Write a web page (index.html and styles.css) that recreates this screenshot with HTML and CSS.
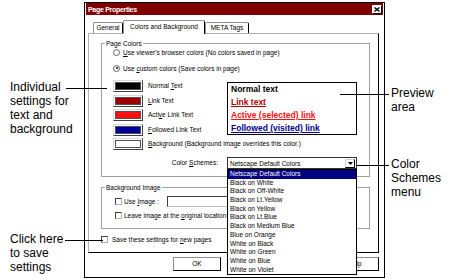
FILE: index.html
```html
<!DOCTYPE html>
<html lang="en">
<head>
  <meta charset="UTF-8">
  <meta name="viewport" content="width=device-width, initial-scale=1.0">
  <title>Page Properties</title>
  <link rel="stylesheet" href="styles.css">
</head>
<body>
  <div class="page">
    <div class="notes notes-left">
      <div class="note note-individual">Individual<br>settings for<br>text and<br>background</div>
      <div class="note note-save">Click here<br>to save<br>settings</div>
    </div>

    <div class="dialog">
      <div class="titlebar">
        <span class="title">Page Properties</span>
        <span class="close">
          <svg width="6" height="5" viewBox="0 0 6 5"><path d="M0.5 0.5 L5.5 4.5 M5.5 0.5 L0.5 4.5" stroke="#000" stroke-width="1.4"/></svg>
        </span>
      </div>

      <div class="tabs">
        <div class="tab tab-general">General</div>
        <div class="tab tab-active">Colors and Background</div>
        <div class="tab tab-meta">META Tags</div>
      </div>

      <div class="panel">
        <fieldset class="group group-colors">
          <legend>Page Colors</legend>
          <div class="group-body">
            <div class="option"><span class="radio"></span><span><u>U</u>se viewer's browser colors (No colors saved in page)</span></div>
            <div class="option"><span class="radio radio-on"></span><span>Use <u>c</u>ustom colors (Save colors in page)</span></div>

            <div class="color-grid">
              <div class="color-row"><span class="swatch"><i class="fill-normal"></i></span><span>Normal <u>T</u>ext</span></div>
              <div class="color-row"><span class="swatch"><i class="fill-link"></i></span><span><u>L</u>ink Text</span></div>
              <div class="color-row"><span class="swatch"><i class="fill-active"></i></span><span>Acti<u>v</u>e Link Text</span></div>
              <div class="color-row"><span class="swatch"><i class="fill-followed"></i></span><span><u>F</u>ollowed Link Text</span></div>
              <div class="preview">
                <div class="pv-normal">Normal text</div>
                <div class="pv-link">Link text</div>
                <div class="pv-active">Active (selected) link</div>
                <div class="pv-followed">Followed (visited) link</div>
              </div>
              <div class="color-row color-row-wide"><span class="swatch"><i class="fill-bg"></i></span><span><u>B</u>ackground (Background image overrides this color.)</span></div>
              <div class="scheme-label">Color <u>S</u>chemes:</div>
              <div class="select">
                <span>Netscape Default Colors</span>
                <span class="select-arrow">
                  <svg width="5" height="3" viewBox="0 0 5 3"><path d="M0 0 H5 L2.5 3 Z" fill="#000"/></svg>
                </span>
                <ul class="dropdown">
                  <li class="selected">Netscape Default Colors</li>
                  <li>Black on White</li>
                  <li>Black on Off-White</li>
                  <li>Black on Lt.Yellow</li>
                  <li>Black on Yellow</li>
                  <li>Black on Lt.Blue</li>
                  <li>Black on Medium Blue</li>
                  <li>Blue on Orange</li>
                  <li>White on Black</li>
                  <li>White on Green</li>
                  <li>White on Blue</li>
                  <li>White on Violet</li>
                </ul>
              </div>
            </div>
          </div>
        </fieldset>

        <fieldset class="group group-image">
          <legend>Background Image</legend>
          <div class="group-body">
            <div class="check-row check-row-image">
              <span class="checkbox"></span>
              <span class="image-label">Use <u>I</u>mage :</span>
              <span class="textbox"></span>
            </div>
            <div class="check-row check-row-leave">
              <span class="checkbox"></span>
              <span>Leave image at the <u>o</u>riginal location</span>
            </div>
          </div>
        </fieldset>

        <div class="check-row save-row">
          <span class="checkbox"></span>
          <span>Save these settings for <u>n</u>ew pages</span>
        </div>
      </div>

      <div class="buttons">
        <div class="button">OK</div>
        <div class="button">Cancel</div>
        <div class="button">Help</div>
      </div>
    </div>

    <div class="notes notes-right">
      <div class="note note-preview">Preview<br>area</div>
      <div class="note note-schemes">Color<br>Schemes<br>menu</div>
    </div>

    <div class="callout callout-individual"></div>
    <div class="callout callout-save"></div>
    <div class="callout callout-preview"></div>
    <div class="callout callout-schemes"></div>
  </div>
</body>
</html>
```

FILE: styles.css
```css
* {
  box-sizing: border-box;
}
body {
  margin: 0;
  background-color: #ffffff;
  font-family: "Liberation Sans", Arial, sans-serif;
  color: #000000;
}
.page {
  position: relative;
  display: flex;
  width: 450px;
  height: 279px;
  padding-top: 2px;
  overflow: hidden;
}

/* annotations */
.notes {
  display: flex;
  flex-direction: column;
  font-size: 12px;
  line-height: 14px;
}
.notes-left {
  width: 84px;
  padding-left: 10px;
}
.notes-right {
  padding-left: 6px;
}
.note-individual {
  margin-top: 78px;
}
.note-save {
  margin-top: 96px;
}
.note-preview {
  margin-top: 84px;
}
.note-schemes {
  margin-top: 43px;
}
.callout {
  position: absolute;
  height: 1px;
  background-color: #000000;
}
.callout-individual {
  left: 66px;
  top: 88px;
  width: 41px;
}
.callout-save {
  left: 65px;
  top: 240px;
  width: 38px;
}
.callout-preview {
  left: 340px;
  top: 94px;
  width: 49px;
}
.callout-schemes {
  left: 357px;
  top: 165px;
  width: 32px;
}

/* dialog */
.dialog {
  display: flex;
  flex-direction: column;
  width: 301px;
  height: 276px;
  border: 1px solid #000000;
  padding: 0 1px;
  font-size: 6.5px;
  line-height: 7px;
  white-space: nowrap;
}
.titlebar {
  display: flex;
  align-items: center;
  justify-content: space-between;
  height: 12px;
  padding: 0 1px 0 2px;
  background-color: #800000;
}
.title {
  color: #ffffff;
  font-weight: bold;
  font-size: 7px;
  letter-spacing: -0.3px;
}
.close {
  display: flex;
  align-items: center;
  justify-content: center;
  width: 10px;
  height: 9px;
  background-color: #ffffff;
  border: 1px solid;
  border-color: #ffffff #000000 #000000 #ffffff;
}

.tabs {
  display: flex;
  align-items: flex-end;
  height: 13px;
  margin-top: 5px;
  padding-left: 7px;
}
.tab {
  height: 11px;
  border: 1px solid #909090;
  border-right-color: #000000;
  border-bottom: none;
  border-radius: 2px 2px 0 0;
  background-color: #ffffff;
  text-align: center;
  line-height: 9px;
}
.tab-general {
  width: 30px;
}
.tab-active {
  position: relative;
  z-index: 1;
  width: 82px;
  height: 14px;
  margin-bottom: -1px;
  line-height: 11px;
}
.tab-meta {
  width: 44px;
}

.panel {
  width: 291px;
  height: 220px;
  margin-left: 2px;
  padding: 6px 0 0 12px;
  border: 1px solid;
  border-color: #b0b0b0 #000000 #000000 #b0b0b0;
}

.group {
  width: 269px;
  min-width: 0;
  margin: 0;
  padding: 0;
  border: 1px solid #a0a0a0;
}
.group legend {
  margin-left: 3px;
  padding: 0 1px;
  line-height: 7px;
}
.group-colors .group-body {
  padding: 1px 12px 7px 11px;
}
.option {
  display: flex;
  align-items: center;
  gap: 3px;
  height: 8px;
}
.option + .option {
  margin-top: 8px;
}
.radio {
  position: relative;
  flex: none;
  width: 7px;
  height: 7px;
  border: 1px solid #606060;
  border-radius: 50%;
  background-color: #ffffff;
}
.radio-on::after {
  content: "";
  position: absolute;
  left: 1.5px;
  top: 1.5px;
  width: 2px;
  height: 2px;
  border-radius: 50%;
  background-color: #000000;
}

.color-grid {
  display: grid;
  grid-template-columns: 114px 130px;
  grid-template-rows: repeat(5, 14.5px) 16.5px;
  margin-top: 8px;
}
.color-row {
  display: flex;
  align-items: flex-start;
  gap: 5px;
  line-height: 12px;
  grid-column: 1;
}
.color-row-wide {
  grid-column: 1 / 3;
}
.swatch {
  flex: none;
  width: 30px;
  height: 12px;
  padding: 1px;
  border: 1px solid;
  border-color: #d8d8d8 #404040 #404040 #d8d8d8;
  background-color: #ffffff;
}
.swatch i {
  display: block;
  height: 100%;
  border: 1px solid #505050;
}
.fill-normal {
  background-color: #000000;
}
.fill-link {
  background-color: #9c0000;
}
.fill-active {
  background-color: #ff1010;
}
.fill-followed {
  background-color: #00009c;
}
.fill-bg {
  background-color: #ffffff;
}

.preview {
  grid-column: 2;
  grid-row: 1 / 5;
  height: 53px;
  margin-top: 2px;
  padding: 0 3px;
  border: 1px solid #000000;
  font-size: 8.5px;
  font-weight: bold;
  line-height: 13px;
  overflow: hidden;
}
.pv-link {
  color: #b40000;
  text-decoration: underline;
}
.pv-active {
  color: #ff1010;
  text-decoration: underline;
}
.pv-followed {
  color: #000090;
  text-decoration: underline;
}

.scheme-label {
  grid-row: 6;
  grid-column: 1;
  align-self: end;
  padding-right: 9px;
  text-align: right;
  line-height: 12px;
}
.select {
  position: relative;
  grid-row: 6;
  grid-column: 2;
  align-self: end;
  display: flex;
  align-items: center;
  justify-content: space-between;
  height: 12px;
  padding: 0 1px 0 2px;
  border: 1px solid #303030;
  background-color: #ffffff;
}
.select-arrow {
  display: flex;
  align-items: center;
  justify-content: center;
  width: 10px;
  height: 9px;
  border: 1px solid;
  border-color: #d0d0d0 #000000 #000000 #d0d0d0;
}
.dropdown {
  position: absolute;
  z-index: 5;
  left: -1px;
  top: calc(100% + 1px);
  width: 130px;
  margin: 0;
  padding: 0;
  list-style: none;
  border: 1px solid #000000;
  background-color: #ffffff;
}
.dropdown li {
  height: 8.7px;
  padding-left: 2px;
  line-height: 8.7px;
}
.dropdown li.selected {
  background-color: #000080;
  color: #ffffff;
}

.group-image {
  margin-top: 7px;
}
.group-image .group-body {
  padding: 5px 0 9px 13px;
}
.check-row {
  display: flex;
  align-items: center;
  gap: 2px;
  height: 8px;
}
.check-row-image {
  height: 11px;
}
.check-row-leave {
  margin-top: 4px;
}
.checkbox {
  flex: none;
  width: 7px;
  height: 7px;
  border: 1px solid;
  border-color: #404040 #b0b0b0 #b0b0b0 #404040;
  background-color: #ffffff;
}
.image-label {
  width: 41px;
}
.textbox {
  width: 175px;
  height: 11px;
  border: 1px solid;
  border-color: #404040 #c0c0c0 #c0c0c0 #404040;
}
.save-row {
  gap: 4px;
  margin-top: 6px;
}

.buttons {
  display: flex;
  justify-content: flex-end;
  gap: 31px;
  margin-top: 4px;
  margin-right: 4px;
}
.button {
  width: 48px;
  height: 14px;
  border: 1px solid;
  border-color: #909090 #000000 #000000 #909090;
  text-align: center;
  line-height: 12px;
}
```
